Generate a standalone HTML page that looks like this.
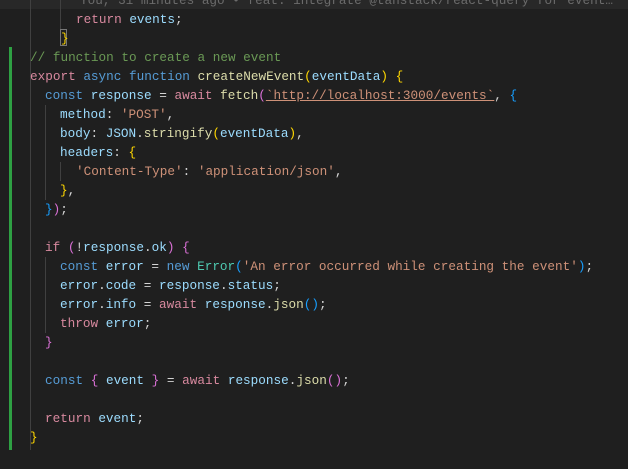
<!DOCTYPE html>
<html><head><meta charset="utf-8"><style>
html,body{margin:0;padding:0;background:#1f1f1f;width:628px;height:469px;overflow:hidden}
#w{position:absolute;left:0;top:0;width:628px;height:469px;overflow:hidden}
.l{position:absolute;left:0;height:19px;line-height:19px;white-space:pre;font-family:"Liberation Mono",monospace;font-size:12.7px;color:#d4d4d4}
.k{color:#d8899f}.b{color:#569cd6}.v{color:#9cdcfe}.f{color:#dcdcaa}.s{color:#ce9178}.c{color:#6a9955}.t{color:#4ec9b0}
.y{color:#ffd700}.p{color:#da70d6}.q{color:#179fff}.g{color:#6b6b6b}
.guide{position:absolute;width:1px;background:#404040}
</style></head><body><div id="w">
<div style="position:absolute;left:0;top:0;width:628px;height:9px;background:#282828"></div>
<div style="position:absolute;left:9px;top:47px;width:3px;height:403px;background:#2ea043"></div>
<div class="guide" style="left:30px;top:0;height:450px"></div>
<div class="guide" style="left:60px;top:0;height:38px"></div>
<div class="guide" style="left:45px;top:105px;height:95px"></div>
<div class="guide" style="left:60px;top:162px;height:19px"></div>
<div class="guide" style="left:45px;top:257px;height:76px"></div>
<div style="position:absolute;left:60px;top:29px;width:7px;height:17px;border:1px solid #777;box-sizing:border-box"></div>
<div class="l" style="top:-9px;left:80px;width:540px;overflow:hidden"><span class="g">You, 31 minutes ago • feat: integrate @tanstack/react-query for event…</span></div>
<div class="l" style="top:10px;left:76px"><span class="k">return</span> <span class="v">events</span>;</div>
<div class="l" style="top:29px;left:61px"><span class="y">}</span></div>
<div class="l" style="top:48px;left:30px"><span class="c">// function to create a new event</span></div>
<div class="l" style="top:67px;left:30px"><span class="k">export</span> <span class="b">async</span> <span class="b">function</span> <span class="f">createNewEvent</span><span class="y">(</span><span class="v">eventData</span><span class="y">)</span> <span class="y">{</span></div>
<div class="l" style="top:86px;left:45px"><span class="b">const</span> <span class="v">response</span> = <span class="k">await</span> <span class="f">fetch</span><span class="p">(</span><span class="s" style="text-decoration:underline">`http://localhost:3000/events`</span>, <span class="q">{</span></div>
<div class="l" style="top:105px;left:60px"><span class="v">method</span>: <span class="s">'POST'</span>,</div>
<div class="l" style="top:124px;left:60px"><span class="v">body</span>: <span class="v">JSON</span>.<span class="f">stringify</span><span class="y">(</span><span class="v">eventData</span><span class="y">)</span>,</div>
<div class="l" style="top:143px;left:60px"><span class="v">headers</span>: <span class="y">{</span></div>
<div class="l" style="top:162px;left:76px"><span class="s">'Content-Type'</span>: <span class="s">'application/json'</span>,</div>
<div class="l" style="top:181px;left:60px"><span class="y">}</span>,</div>
<div class="l" style="top:200px;left:45px"><span class="q">}</span><span class="p">)</span>;</div>
<div class="l" style="top:238px;left:45px"><span class="k">if</span> <span class="p">(</span>!<span class="v">response</span>.<span class="v">ok</span><span class="p">)</span> <span class="p">{</span></div>
<div class="l" style="top:257px;left:60px"><span class="b">const</span> <span class="v">error</span> = <span class="b">new</span> <span class="t">Error</span><span class="q">(</span><span class="s">'An error occurred while creating the event'</span><span class="q">)</span>;</div>
<div class="l" style="top:276px;left:60px"><span class="v">error</span>.<span class="v">code</span> = <span class="v">response</span>.<span class="v">status</span>;</div>
<div class="l" style="top:295px;left:60px"><span class="v">error</span>.<span class="v">info</span> = <span class="k">await</span> <span class="v">response</span>.<span class="f">json</span><span class="q">()</span>;</div>
<div class="l" style="top:314px;left:60px"><span class="k">throw</span> <span class="v">error</span>;</div>
<div class="l" style="top:333px;left:45px"><span class="p">}</span></div>
<div class="l" style="top:371px;left:45px"><span class="b">const</span> <span class="p">{</span> <span class="v">event</span> <span class="p">}</span> = <span class="k">await</span> <span class="v">response</span>.<span class="f">json</span><span class="p">()</span>;</div>
<div class="l" style="top:409px;left:45px"><span class="k">return</span> <span class="v">event</span>;</div>
<div class="l" style="top:428px;left:30px"><span class="y">}</span></div>
</div></body></html>
